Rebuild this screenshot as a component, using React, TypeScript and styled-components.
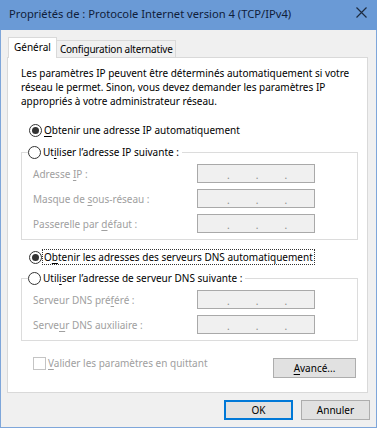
import React from "react";
import styled, { createGlobalStyle } from "styled-components";

const GlobalStyle = createGlobalStyle`
  html, body {
    margin: 0;
    padding: 0;
    background: #ffffff;
  }
  body {
    font-family: "Noto Sans", "Open Sans", sans-serif;
    font-size: 10px;
    color: #000;
  }
`;

const Window = styled.div`
  width: 377px;
  height: 428px;
  box-sizing: border-box;
  border: 1px solid #7ea6da;
  border-top: none;
  background: #f0f0f0;
  display: flex;
  flex-direction: column;
`;

const TitleBar = styled.div`
  height: 30px;
  margin: 0 -1px;
  background: #6a9ad6;
  display: flex;
  align-items: center;
  justify-content: space-between;
  padding: 0 8px 0 9px;
  flex-shrink: 0;
`;

const Title = styled.span`
  color: #10203a;
  font-size: 11.2px;
  line-height: 16px;
  margin-top: -3px;
`;

const CloseIcon = styled.svg`
  width: 11px;
  height: 11px;
  margin-top: -5px;
  margin-right: 2px;
`;

const Body = styled.div`
  flex: 1;
  display: flex;
  flex-direction: column;
  padding: 7px 7px 7px 6px;
`;

const Tabs = styled.div`
  display: flex;
  align-items: flex-end;
  height: 21px;
  padding-left: 1px;
  margin-bottom: -1px;
  position: relative;
  z-index: 1;
`;

const Tab = styled.div<{ $active?: boolean }>`
  box-sizing: border-box;
  height: ${(p) => (p.$active ? "21px" : "18px")};
  padding: ${(p) => (p.$active ? "0 5px" : "0 2px 0 3px")};
  margin-left: ${(p) => (p.$active ? "0" : "-1px")};
  border: 1px solid #d9d9d9;
  border-bottom: ${(p) => (p.$active ? "none" : "1px solid #d9d9d9")};
  background: ${(p) => (p.$active ? "#ffffff" : "#f0f0f0")};
  line-height: 14px;
  display: flex;
  align-items: center;
  padding-bottom: ${(p) => (p.$active ? "3px" : "0")};
  letter-spacing: ${(p) => (p.$active ? "0" : "-0.2px")};
`;

const Panel = styled.div`
  box-sizing: border-box;
  width: 361px;
  height: 336px;
  background: #ffffff;
  border: 1px solid #d9d9d9;
  padding: 8px 9px 0 13px;
  display: flex;
  flex-direction: column;
`;

const Desc = styled.p`
  margin: 0;
  line-height: 14px;
  white-space: nowrap;
`;

const RadioRow = styled.label<{ $top: number }>`
  display: flex;
  align-items: center;
  height: 16px;
  margin-top: ${(p) => p.$top}px;
  padding-left: 8px;
  white-space: nowrap;
`;

const RadioCircle = styled.span<{ $checked?: boolean }>`
  box-sizing: border-box;
  width: 13px;
  height: 13px;
  border-radius: 50%;
  border: 1px solid #333333;
  background: #ffffff;
  display: flex;
  align-items: center;
  justify-content: center;
  margin-right: 1px;
  flex-shrink: 0;
  &::after {
    content: "";
    width: 7px;
    height: 7px;
    border-radius: 50%;
    background: #333333;
    display: ${(p) => (p.$checked ? "block" : "none")};
  }
`;

const RadioText = styled.span<{ $focused?: boolean }>`
  line-height: 14px;
  padding: 0 1px;
  outline: ${(p) => (p.$focused ? "1px dotted #333" : "none")};
  outline-offset: 0;
`;

const Group = styled.fieldset<{ $top: number }>`
  margin: ${(p) => p.$top}px 0 0 0;
  padding: 0 0 6px 11px;
  border: 1px solid #dcdcdc;
  min-width: 0;
  width: 337px;
  box-sizing: border-box;
  display: flex;
  flex-direction: column;
  gap: 6px;
`;

const Legend = styled.legend`
  padding: 0 2px 0 0;
  margin-left: -5px;
  height: 16px;
  display: flex;
  align-items: center;
  white-space: nowrap;
  margin-bottom: 4px;
`;

const FieldRow = styled.div`
  display: flex;
  align-items: center;
  height: 19px;
`;

const FieldLabel = styled.span`
  width: 164px;
  color: #a0a0a0;
  line-height: 14px;
`;

const IpBox = styled.div`
  box-sizing: border-box;
  width: 118px;
  height: 19px;
  background: #f0f0f0;
  border: 1px solid #a9a9a9;
  display: flex;
  align-items: center;
  padding-left: 29px;
  color: #8a8a8a;
  line-height: 14px;
`;

const IpDot = styled.span`
  margin-right: 26px;
  margin-top: 2px;
`;

const BottomRow = styled.div`
  display: flex;
  align-items: flex-start;
  justify-content: space-between;
  margin-top: 15px;
  padding-left: 12px;
  padding-right: 2px;
`;

const CheckRow = styled.label`
  display: flex;
  align-items: center;
  height: 14px;
  color: #a0a0a0;
`;

const CheckBox = styled.span`
  box-sizing: border-box;
  width: 13px;
  height: 13px;
  border: 1px solid #c4c4c4;
  background: #ffffff;
  margin-right: 2px;
`;

const Button = styled.button<{ $default?: boolean; $top?: number }>`
  box-sizing: border-box;
  width: ${(p) => (p.$default !== undefined ? "69px" : "83px")};
  height: 20px;
  margin-top: ${(p) => p.$top ?? 0}px;
  background: #e1e1e1;
  border: 1px solid ${(p) => (p.$default ? "#0078d7" : "#adadad")};
  box-shadow: ${(p) => (p.$default ? "inset 0 0 0 1px #0078d7" : "none")};
  font-family: inherit;
  font-size: 10px;
  color: #000;
  padding: 0;
  line-height: 14px;
`;

const Footer = styled.div`
  display: flex;
  justify-content: flex-end;
  gap: 8px;
  margin-top: 7px;
  margin-right: -1px;
`;

const U = styled.span`
  text-decoration: underline;
  text-underline-offset: 2px;
`;

function Ip() {
  return (
    <IpBox>
      <IpDot>.</IpDot>
      <IpDot>.</IpDot>
      <IpDot>.</IpDot>
    </IpBox>
  );
}

export default function App() {
  return (
    <>
      <GlobalStyle />
      <Window>
        <TitleBar>
          <Title>Propriétés de : Protocole Internet version 4 (TCP/IPv4)</Title>
          <CloseIcon viewBox="0 0 11 11">
            <path d="M0.5 0.5 L10.5 10.5 M10.5 0.5 L0.5 10.5" stroke="#1d2b40" strokeWidth="1.2" fill="none" />
          </CloseIcon>
        </TitleBar>
        <Body>
          <Tabs>
            <Tab $active>Général</Tab>
            <Tab>Configuration alternative</Tab>
          </Tabs>
          <Panel>
            <Desc>
              Les paramètres IP peuvent être déterminés automatiquement si votre
              <br />
              réseau le permet. Sinon, vous devez demander les paramètres IP
              <br />
              appropriés à votre administrateur réseau.
            </Desc>
            <RadioRow $top={14}>
              <RadioCircle $checked />
              <RadioText>
                <U>O</U>btenir une adresse IP automatiquement
              </RadioText>
            </RadioRow>
            <Group $top={6}>
              <Legend>
                <RadioCircle />
                <RadioText>
                  Ut<U>i</U>liser l’adresse IP suivante :
                </RadioText>
              </Legend>
              <FieldRow>
                <FieldLabel>
                  Adresse <U>I</U>P :
                </FieldLabel>
                <Ip />
              </FieldRow>
              <FieldRow>
                <FieldLabel>
                  Masque de <U>s</U>ous-réseau :
                </FieldLabel>
                <Ip />
              </FieldRow>
              <FieldRow>
                <FieldLabel>
                  Passerelle par <U>d</U>éfaut :
                </FieldLabel>
                <Ip />
              </FieldRow>
            </Group>
            <RadioRow $top={9}>
              <RadioCircle $checked />
              <RadioText $focused>
                O<U>b</U>tenir les adresses des serveurs DNS automatiquement
              </RadioText>
            </RadioRow>
            <Group $top={5}>
              <Legend>
                <RadioCircle />
                <RadioText>
                  Util<U>i</U>ser l’adresse de serveur DNS suivante :
                </RadioText>
              </Legend>
              <FieldRow>
                <FieldLabel>
                  Serveur DNS pré<U>f</U>éré :
                </FieldLabel>
                <Ip />
              </FieldRow>
              <FieldRow>
                <FieldLabel>
                  Serve<U>u</U>r DNS auxiliaire :
                </FieldLabel>
                <Ip />
              </FieldRow>
            </Group>
            <BottomRow>
              <CheckRow>
                <CheckBox />
                <span>
                  <U>V</U>alider les paramètres en quittant
                </span>
              </CheckRow>
              <Button $top={2}>
                <U>A</U>vancé...
              </Button>
            </BottomRow>
          </Panel>
          <Footer>
            <Button $default>OK</Button>
            <Button $default={false}>Annuler</Button>
          </Footer>
        </Body>
      </Window>
    </>
  );
}
